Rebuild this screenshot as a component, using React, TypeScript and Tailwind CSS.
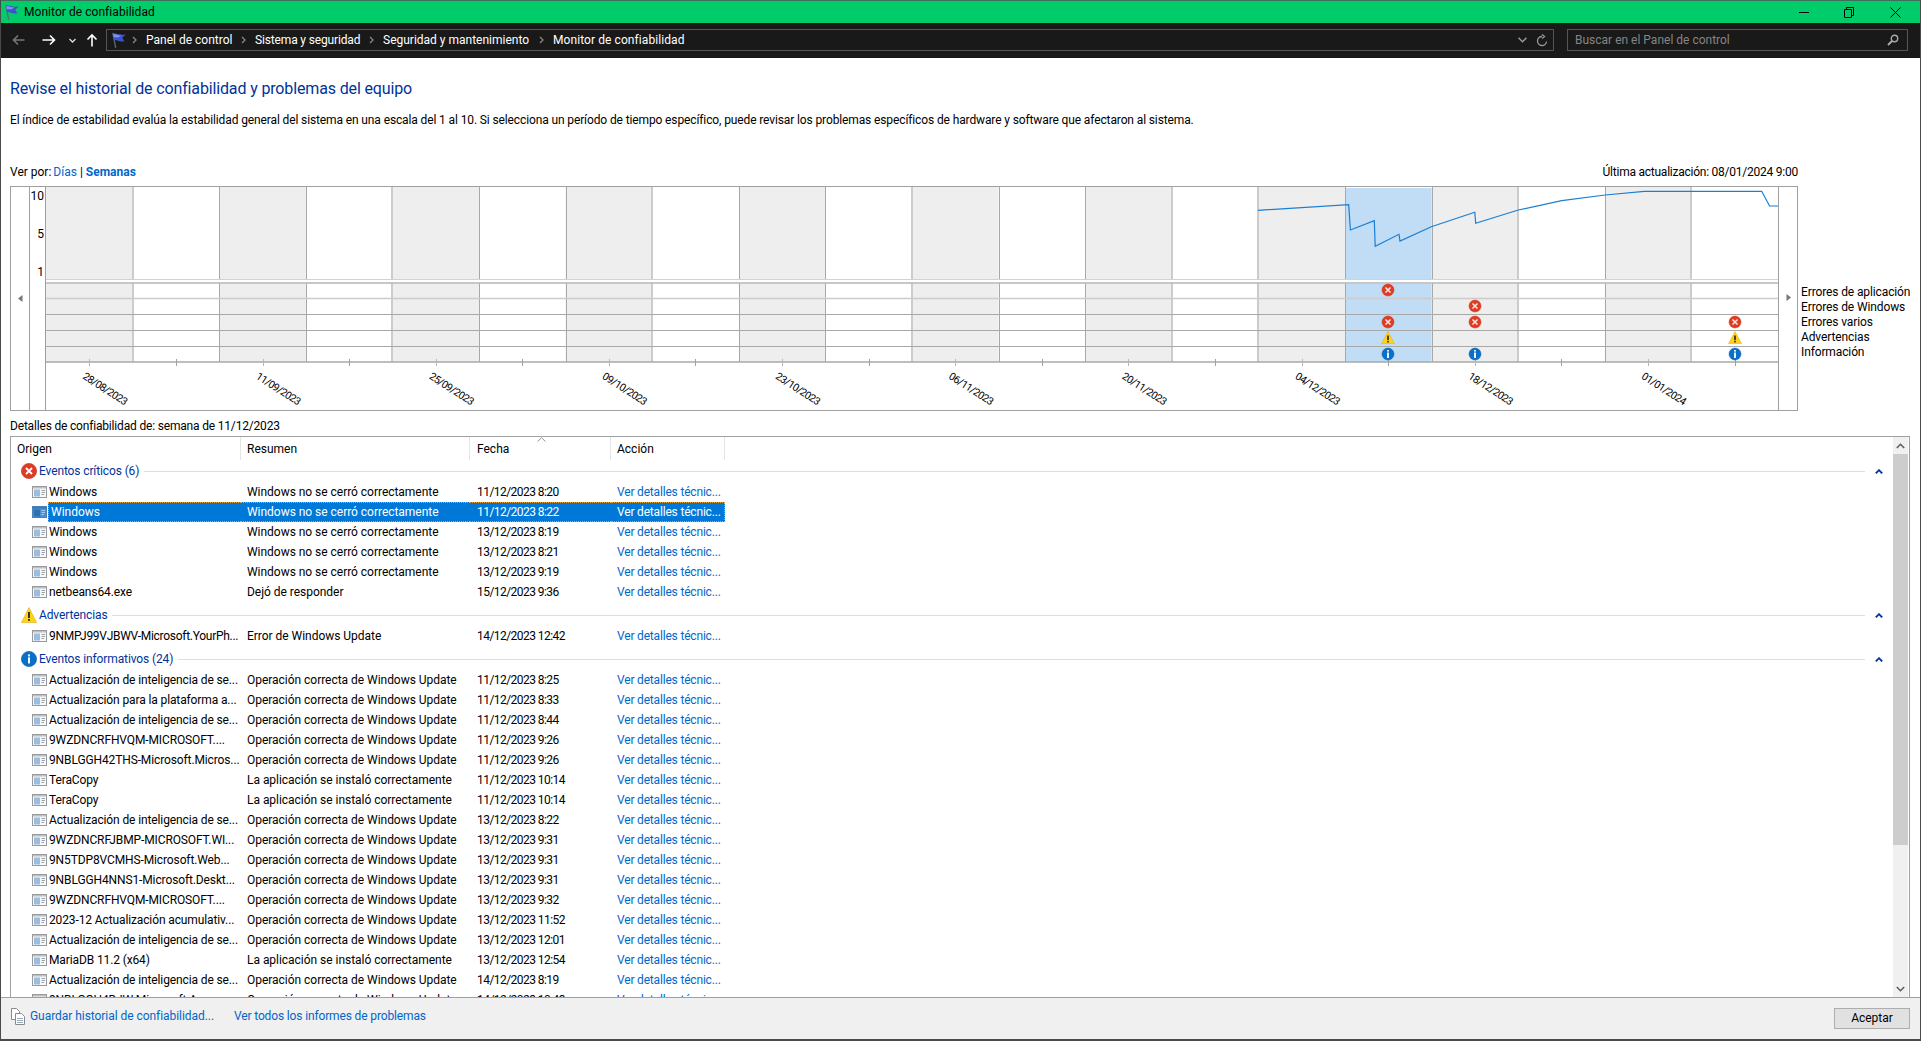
import React from "react";

const FONT = "font-['Roboto','Liberation_Sans',sans-serif]";

const Flag = () => (
  <svg width="17" height="17" viewBox="0 0 16 16" className="shrink-0">
    <path d="M2 1 L3.2 0.8 L6 14.6 L4.8 15 Z" fill="#5a6a80" />
    <path d="M2.6 1.4 C6 0.6 8 3.6 15 2 L11.6 5.4 L13.4 8.6 C8 9.8 6.4 6.8 3.8 7.8 Z" fill="#3f53c9" />
    <path d="M3 2 C5.5 1.6 7 3.4 11 3.2 L8 5 C6 5.4 5 4.6 3.4 5 Z" fill="#7f93ea" />
  </svg>
);

const RowIcon = ({ sel }: { sel?: boolean }) => (
  <svg width="15" height="12" viewBox="0 0 15 12" className="shrink-0">
    <rect x="0.5" y="0.5" width="14" height="11" fill={sel ? "#4a90d0" : "#f7f9fb"} stroke={sel ? "#4a80b8" : "#9a9a9a"} />
    <rect x="1" y="1" width="13" height="1.5" fill={sel ? "#3a78b8" : "#b8c0c8"} />
    <rect x="2" y="3.5" width="6" height="7" fill={sel ? "#2f70b5" : "#9dbde0"} />
    <path d="M9.5 4.5h3.5M9.5 6.5h3.5M9.5 8.5h2.5" stroke={sel ? "#a8c8e8" : "#9aa3ad"} />
  </svg>
);

const ErrorBig = () => (
  <svg width="16" height="16" viewBox="0 0 16 16" className="shrink-0">
    <circle cx="8" cy="8" r="7.6" fill="#e03c22" stroke="#b8281a" strokeWidth="0.6" />
    <path d="M5 5l6 6M11 5l-6 6" stroke="#fff" strokeWidth="1.8" />
  </svg>
);
const WarnBig = () => (
  <svg width="16" height="16" viewBox="0 0 16 16" className="shrink-0">
    <path d="M8 0.5 L15.6 15.5 H0.4 Z" fill="#ffd21f" stroke="#d9a400" strokeWidth="0.5" />
    <path d="M8 5v6" stroke="#222" strokeWidth="1.8" />
    <rect x="7.1" y="12" width="1.8" height="1.8" fill="#222" />
  </svg>
);
const InfoBig = () => (
  <svg width="16" height="16" viewBox="0 0 16 16" className="shrink-0">
    <circle cx="8" cy="8" r="7.6" fill="#0a6fc9" stroke="#0a55a0" strokeWidth="0.6" />
    <rect x="7" y="6.4" width="2" height="6" fill="#fff" />
    <rect x="7" y="3.4" width="2" height="2" fill="#fff" />
  </svg>
);

type Row = [string, string, string, boolean?];
const NO = "Windows no se cerró correctamente";
const OK = "Operación correcta de Windows Update";
const IN = "La aplicación se instaló correctamente";
const AI = "Actualización de inteligencia de se...";

const groups: { title: string; icon: React.ReactNode; rows: Row[] }[] = [
  {
    title: "Eventos críticos (6)",
    icon: <ErrorBig />,
    rows: [
      ["Windows", NO, "11/12/2023 8:20"],
      ["Windows", NO, "11/12/2023 8:22", true],
      ["Windows", NO, "13/12/2023 8:19"],
      ["Windows", NO, "13/12/2023 8:21"],
      ["Windows", NO, "13/12/2023 9:19"],
      ["netbeans64.exe", "Dejó de responder", "15/12/2023 9:36"],
    ],
  },
  {
    title: "Advertencias",
    icon: <WarnBig />,
    rows: [["9NMPJ99VJBWV-Microsoft.YourPh...", "Error de Windows Update", "14/12/2023 12:42"]],
  },
  {
    title: "Eventos informativos (24)",
    icon: <InfoBig />,
    rows: [
      [AI, OK, "11/12/2023 8:25"],
      ["Actualización para la plataforma a...", OK, "11/12/2023 8:33"],
      [AI, OK, "11/12/2023 8:44"],
      ["9WZDNCRFHVQM-MICROSOFT....", OK, "11/12/2023 9:26"],
      ["9NBLGGH42THS-Microsoft.Micros...", OK, "11/12/2023 9:26"],
      ["TeraCopy", IN, "11/12/2023 10:14"],
      ["TeraCopy", IN, "11/12/2023 10:14"],
      [AI, OK, "13/12/2023 8:22"],
      ["9WZDNCRFJBMP-MICROSOFT.WI...", OK, "13/12/2023 9:31"],
      ["9N5TDP8VCMHS-Microsoft.Web...", OK, "13/12/2023 9:31"],
      ["9NBLGGH4NNS1-Microsoft.Deskt...", OK, "13/12/2023 9:31"],
      ["9WZDNCRFHVQM-MICROSOFT....", OK, "13/12/2023 9:32"],
      ["2023-12 Actualización acumulativ...", OK, "13/12/2023 11:52"],
      [AI, OK, "13/12/2023 12:01"],
      ["MariaDB 11.2 (x64)", IN, "13/12/2023 12:54"],
      [AI, OK, "14/12/2023 8:19"],
      ["9NBLGGH4BJW-Microsoft.A...", OK, "14/12/2023 10:43"],
    ],
  },
];

const STEP = 86.6;
const colX = (i: number) => 46 + i * STEP;
const THICK = [1, 4, 7, 10, 13, 14, 17, 19];
const DATES = ["28/08/2023", "11/09/2023", "25/09/2023", "09/10/2023", "23/10/2023", "06/11/2023", "20/11/2023", "04/12/2023", "18/12/2023", "01/01/2024"];
const ROWLINES: [number, string][] = [[298.5, "#cccccc"], [314.5, "#a8a8a8"], [330.5, "#a8a8a8"], [346.5, "#a8a8a8"]];
const LINE = "1258,210.3 1348.7,204.7 1350.4,230 1374.3,220.7 1375.2,246.3 1399,234.3 1400,241 1431.3,226.7 1474.8,212.3 1475.7,223.3 1518.3,210 1561.7,200.7 1605.2,195 1644.3,191.3 1761.7,191.3 1769.6,206 1778,206";

const ChartErr = ({ x, y }: { x: number; y: number }) => (
  <g>
    <circle cx={x} cy={y} r="6" fill="#e03c22" stroke="#c93019" strokeWidth="0.5" />
    <path d={`M${x - 2.5} ${y - 2.5}l5 5M${x + 2.5} ${y - 2.5}l-5 5`} stroke="#fde8e4" strokeWidth="1.5" />
  </g>
);
const ChartWarn = ({ x, y }: { x: number; y: number }) => (
  <g>
    <path d={`M${x} ${y - 6.5}L${x + 6.5} ${y + 5.5}H${x - 6.5}Z`} fill="#ffd21f" stroke="#e0ae00" strokeWidth="0.5" />
    <path d={`M${x} ${y - 2.5}v4.5`} stroke="#222" strokeWidth="1.6" />
    <rect x={x - 0.8} y={y + 2.8} width="1.6" height="1.6" fill="#222" />
  </g>
);
const ChartInfo = ({ x, y }: { x: number; y: number }) => (
  <g>
    <circle cx={x} cy={y} r="6" fill="#0a6fc9" stroke="#0a5ca8" strokeWidth="0.5" />
    <rect x={x - 0.9} y={y - 1.5} width="1.8" height="5.5" fill="#fff" />
    <rect x={x - 0.9} y={y - 4} width="1.8" height="1.6" fill="#fff" />
  </g>
);

const Chart = () => (
  <svg width="1732" height="223" viewBox="46 187 1732 223" className="block shrink-0">
    {Array.from({ length: 20 }, (_, i) => (
      <g key={i}>
        {i % 2 === 0 && <rect x={colX(i)} y="187" width={STEP} height="92" fill="#eeeeee" />}
        {i % 2 === 0 && <rect x={colX(i)} y="284" width={STEP} height="78" fill="#eeeeee" />}
      </g>
    ))}
    <rect x={colX(15)} y="188" width={STEP} height="91" fill="#c0ddf5" />
    <rect x={colX(15)} y="284" width={STEP} height="78" fill="#c0ddf5" />
    {Array.from({ length: 19 }, (_, i) => {
      const n = i + 1;
      const thick = THICK.includes(n);
      const x = Math.round(colX(n)) + (thick ? 0 : 0.5);
      return (
        <g key={n}>
          <path d={`M${x} 187V279`} stroke={thick ? "#cccccc" : "#a8a8a8"} strokeWidth={thick ? 2 : 1} />
          <path d={`M${x} 283V362`} stroke={thick ? "#cccccc" : "#a8a8a8"} strokeWidth={thick ? 2 : 1} />
        </g>
      );
    })}
    <path d="M46 279.5H1778" stroke="#d2d2d2" />
    <path d="M46 283H1778" stroke="#b4b4b4" strokeWidth="1.6" />
    {ROWLINES.map(([y, c]) => (
      <path key={y} d={`M46 ${y}H1778`} stroke={c} strokeWidth={c === "#cccccc" ? 1.6 : 1} />
    ))}
    <path d="M46 362H1778" stroke="#a8a8a8" strokeWidth="1.6" />
    {Array.from({ length: 20 }, (_, i) => (
      <path key={i} d={`M${Math.round(colX(i) + STEP / 2) + 0.5} 359V366`} stroke={i % 2 === 0 ? "#b8b8b8" : "#a0a0a0"} />
    ))}
    <polyline points={LINE} fill="none" stroke="#1a7fd4" strokeWidth="1.2" />
    <ChartErr x={1388} y={290} />
    <ChartErr x={1475} y={306} />
    <ChartErr x={1388} y={322} />
    <ChartErr x={1475} y={322} />
    <ChartErr x={1735} y={322} />
    <ChartWarn x={1388} y={338} />
    <ChartWarn x={1735} y={338} />
    <ChartInfo x={1388} y={354} />
    <ChartInfo x={1475} y={354} />
    <ChartInfo x={1735} y={354} />
    {DATES.map((d, i) => {
      const x = 82 + i * 173.2;
      return (
        <text key={d} x={x} y="378" fontSize="10.5" letterSpacing="-0.55" fill="#000" fontFamily="Roboto, sans-serif" transform={`rotate(33 ${x} 378)`}>
          {d}
        </text>
      );
    })}
  </svg>
);

const Crumb = ({ label, w, cls = "" }: { label: string; w: string; cls?: string }) => (
  <div className={`flex items-center ${w}`}>
    <svg width="5" height="8" viewBox="0 0 5 8" className="shrink-0 mr-[9px]"><path d="M1 1L4 4L1 7" fill="none" stroke="#8c8c8c" strokeWidth="1.2" /></svg>
    <span className={`text-white text-[12px] whitespace-nowrap ${cls}`}>{label}</span>
  </div>
);

export default function App() {
  return (
    <div className={`${FONT} w-[1921px] h-[1041px] flex flex-col overflow-hidden bg-white text-[12px] text-black border-l border-r border-[#4a4a4a]`}>
      {/* title bar */}
      <div className="h-[23px] shrink-0 bg-[#00cc6a] border-t border-[#3d6f5a] flex items-center pl-[2px]">
        <Flag />
        <span className="ml-[4px] text-[12px] text-black whitespace-nowrap tracking-[0.05px]">Monitor de confiabilidad</span>
        <div className="ml-auto flex items-center">
          <div className="w-[45px] flex justify-center">
            <svg width="10" height="10" viewBox="0 0 10 10"><path d="M0 5.5H10" stroke="#000" /></svg>
          </div>
          <div className="w-[46px] flex justify-center">
            <svg width="10" height="11" viewBox="0 0 10 11"><path d="M0.5 2.5H7.5V10.5H0.5ZM2.5 2.5V0.5H9.5V8.5H7.5" fill="none" stroke="#000" /></svg>
          </div>
          <div className="w-[46px] flex justify-center mr-[2px]">
            <svg width="11" height="11" viewBox="0 0 11 11"><path d="M0.5 0.5L10.5 10.5M10.5 0.5L0.5 10.5" stroke="#000" /></svg>
          </div>
        </div>
      </div>

      {/* navigation bar */}
      <div className="h-[35px] shrink-0 bg-[#191919] flex items-center pb-[1px]">
        <div className="w-[105px] shrink-0 flex items-center pl-[11px]">
          <svg width="13" height="12" viewBox="0 0 13 12"><path d="M12.5 6H1.5M6 1.5L1.5 6L6 10.5" fill="none" stroke="#777" strokeWidth="1.6" /></svg>
          <svg width="14" height="12" viewBox="0 0 14 12" className="ml-[17px]"><path d="M0.5 6H12M8 1.5L12.5 6L8 10.5" fill="none" stroke="#fff" strokeWidth="1.6" /></svg>
          <svg width="7" height="5" viewBox="0 0 7 5" className="ml-[13px]"><path d="M0.5 1L3.5 4L6.5 1" fill="none" stroke="#ddd" strokeWidth="1.3" /></svg>
          <svg width="12" height="14" viewBox="0 0 12 14" className="ml-[10px]"><path d="M6 13.5V2M1.5 6.5L6 2L10.5 6.5" fill="none" stroke="#fff" strokeWidth="1.6" /></svg>
        </div>
        <div className="h-[22px] w-[1448px] shrink-0 border border-[#555] flex items-center">
          <div className="ml-[3px] w-[22px] shrink-0"><Flag /></div>
          <Crumb label="Panel de control" w="w-[109px]" />
          <Crumb label="Sistema y seguridad" w="w-[128px]" cls="tracking-[-0.15px]" />
          <Crumb label="Seguridad y mantenimiento" w="w-[170px]" />
          <Crumb label="Monitor de confiabilidad" w="w-[160px]" cls="tracking-[0.08px]" />
          <div className="ml-auto flex items-center pr-[5px]">
            <svg width="9" height="6" viewBox="0 0 9 6"><path d="M0.5 0.8L4.5 4.8L8.5 0.8" fill="none" stroke="#999" strokeWidth="1.5" /></svg>
            <svg width="12" height="13" viewBox="0 0 12 13" className="ml-[9px]"><path d="M6 2.5A4.5 4.5 0 1 0 10.5 7.5M6 0.5L8.5 2.5L6 4.5" fill="none" stroke="#999" strokeWidth="1.3" /></svg>
          </div>
        </div>
        <div className="ml-[13px] h-[22px] w-[341px] shrink-0 border border-[#555] flex items-center pl-[7px] pr-[8px]">
          <span className="text-[#858585] text-[12px] whitespace-nowrap">Buscar en el Panel de control</span>
          <svg width="12" height="12" viewBox="0 0 12 12" className="ml-auto"><circle cx="7.5" cy="4.5" r="3.2" fill="none" stroke="#aaa" strokeWidth="1.4" /><path d="M5 7L1 11" stroke="#aaa" strokeWidth="2" /></svg>
        </div>
      </div>

      {/* content */}
      <div className="flex-1 min-h-0 flex flex-col pl-[9px] pr-[10px]">
        <h1 className="mt-[20px] h-[22px] leading-[22px] text-[16px] font-normal text-[#003399] whitespace-nowrap tracking-[-0.14px]">Revise el historial de confiabilidad y problemas del equipo</h1>
        <p className="mt-[11px] h-[18px] leading-[18px] whitespace-nowrap tracking-[-0.12px]">El índice de estabilidad evalúa la estabilidad general del sistema en una escala del 1 al 10. Si selecciona un período de tiempo específico, puede revisar los problemas específicos de hardware y software que afectaron al sistema.</p>
        <div className="mt-[34px] h-[18px] leading-[18px] flex w-[1788px] whitespace-nowrap">
          <span>Ver por: </span>
          <span className="ml-[2px] text-[#0066cc]">Días</span>
          <span className="mx-[3px]">|</span>
          <span className="text-[#0066cc] font-bold">Semanas</span>
          <span className="ml-auto tracking-[-0.24px]">Última actualización: 08/01/2024 9:00</span>
        </div>

        {/* chart */}
        <div className="mt-[5px] flex items-start h-[225px] shrink-0">
          <div className="flex h-[225px] border border-[#a0a0a0] shrink-0">
            <div className="w-[19px] border-r border-[#a0a0a0] flex items-center justify-center pb-[2px]">
              <svg width="5" height="7" viewBox="0 0 5 7" className="mt-[1px]"><path d="M4.5 0V7L0 3.5Z" fill="#777" /></svg>
            </div>
            <div className="w-[16px] border-r border-[#a0a0a0] flex flex-col items-end pr-[1px] pt-[1px] text-[12px] leading-[16px]">
              <span>10</span>
              <span className="mt-[22px]">5</span>
              <span className="mt-[22px]">1</span>
            </div>
            <Chart />
            <div className="w-[19px] border-l border-[#a0a0a0] flex items-center justify-center pb-[2px]">
              <svg width="5" height="7" viewBox="0 0 5 7"><path d="M0.5 0V7L5 3.5Z" fill="#777" /></svg>
            </div>
          </div>
          <div className="ml-[3px] mt-[99px] flex flex-col leading-[15px] whitespace-nowrap tracking-[-0.12px]">
            <span>Errores de aplicación</span>
            <span>Errores de Windows</span>
            <span>Errores varios</span>
            <span>Advertencias</span>
            <span>Información</span>
          </div>
        </div>

        <div className="mt-[6px] h-[18px] leading-[18px] whitespace-nowrap tracking-[-0.18px]">Detalles de confiabilidad de: semana de 11/12/2023</div>

        {/* table */}
        <div className="mt-[1px] flex-1 min-h-0 border border-b-0 border-[#a0a0a0] flex overflow-hidden">
          <div className="flex-1 min-w-0 flex flex-col overflow-hidden">
            <div className="h-[23px] shrink-0 grid grid-cols-[230px_229px_141px_114px] w-[714px]">
              <div className="pl-[6px] border-r border-[#e5e5e5] flex items-center">Origen</div>
              <div className="pl-[6px] border-r border-[#e5e5e5] flex items-center">Resumen</div>
              <div className="pl-[7px] border-r border-[#e5e5e5] flex items-center relative">
                Fecha
                <svg width="9" height="5" viewBox="0 0 9 5" className="absolute left-[67px] top-0"><path d="M0.5 4.5L4.5 0.8L8.5 4.5" fill="none" stroke="#999" /></svg>
              </div>
              <div className="pl-[6px] border-r border-[#e5e5e5] flex items-center">Acción</div>
            </div>
            {groups.map((g, gi) => (
              <div key={g.title} className={gi ? "mt-[2px]" : ""}>
                <div className="h-[22px] flex items-center pl-[10px]">
                  {g.icon}
                  <span className="ml-[2px] text-[#003399] whitespace-nowrap tracking-[-0.12px]">{g.title}</span>
                  <div className="flex-1 h-px bg-[#d5dff0] ml-[5px]" />
                  <svg width="8" height="5" viewBox="0 0 8 5" className="ml-[10px] mr-[10px]"><path d="M0.8 4.4L4 1.2L7.2 4.4" fill="none" stroke="#003399" strokeWidth="1.8" /></svg>
                </div>
                {g.rows.map((r, i) => (
                  <div key={i} className="h-[20px] grid grid-cols-[230px_229px_141px_114px] w-[714px]">
                    <div className="flex items-center pl-[21px] whitespace-nowrap">
                      <RowIcon sel={r[3]} />
                      <span className={r[3] ? "ml-px pl-[2px] self-stretch flex-1 flex items-center bg-[#0078d7] text-white border-l border-y border-dotted border-[#e8a33d]" : r[0].startsWith("9NMP") ? "ml-[2px] tracking-[-0.28px]" : "ml-[2px] tracking-[-0.12px]"}>{r[0]}</span>
                    </div>
                    <div className={`flex items-center pl-[6px] whitespace-nowrap tracking-[-0.03px] ${r[3] ? "bg-[#0078d7] text-white border-y border-dotted border-[#e8a33d]" : ""}`}>{r[1]}</div>
                    <div className={`flex items-center pl-[7px] whitespace-nowrap tracking-[-0.55px] ${r[3] ? "bg-[#0078d7] text-white border-y border-dotted border-[#e8a33d]" : ""}`}>{r[2]}</div>
                    <div className={`flex items-center pl-[6px] whitespace-nowrap tracking-[-0.18px] ${r[3] ? "bg-[#0078d7] text-white border-y border-r border-dotted border-[#e8a33d]" : "text-[#0066cc]"}`}>Ver detalles técnic...</div>
                  </div>
                ))}
              </div>
            ))}
          </div>
          {/* scrollbar */}
          <div className="w-[15px] shrink-0 bg-[#f0f0f0] flex flex-col mr-px">
            <div className="h-[17px] flex items-center justify-center shrink-0">
              <svg width="9" height="6" viewBox="0 0 9 6"><path d="M0.8 5L4.5 1.3L8.2 5" fill="none" stroke="#606060" strokeWidth="1.6" /></svg>
            </div>
            <div className="h-[391px] bg-[#cdcdcd] shrink-0" />
            <div className="mt-auto h-[17px] flex items-center justify-center shrink-0">
              <svg width="9" height="6" viewBox="0 0 9 6"><path d="M0.8 1L4.5 4.7L8.2 1" fill="none" stroke="#606060" strokeWidth="1.6" /></svg>
            </div>
          </div>
        </div>
      </div>

      {/* footer */}
      <div className="h-[44px] shrink-0 bg-[#f0f0f0] border-t border-[#a0a0a0] border-b-2 border-b-[#4a4a4a] flex items-center pl-[10px] pr-[10px]">
        <svg width="14" height="17" viewBox="0 0 14 17" className="shrink-0 mb-[5px]">
          <path d="M0.5 0.5H5.5L8.5 3.5V11.5H0.5Z" fill="#fff" stroke="#8a8a8a" />
          <path d="M4.5 5.5H10.5L13.5 8.5V16.5H4.5Z" fill="#fff" stroke="#8a8a8a" />
          <path d="M6 10.5H12M6 12.5H12M6 14.5H12" stroke="#9ab" />
        </svg>
        <span className="ml-[5px] w-[204px] mb-[6px] text-[#0066cc] whitespace-nowrap tracking-[-0.05px]">Guardar historial de confiabilidad...</span>
        <span className="mb-[6px] text-[#0066cc] whitespace-nowrap tracking-[-0.14px]">Ver todos los informes de problemas</span>
        <button className="ml-auto w-[76px] h-[21px] mb-[1px] bg-[#e1e1e1] border border-[#adadad] text-[12px] text-black">Aceptar</button>
      </div>
    </div>
  );
}
